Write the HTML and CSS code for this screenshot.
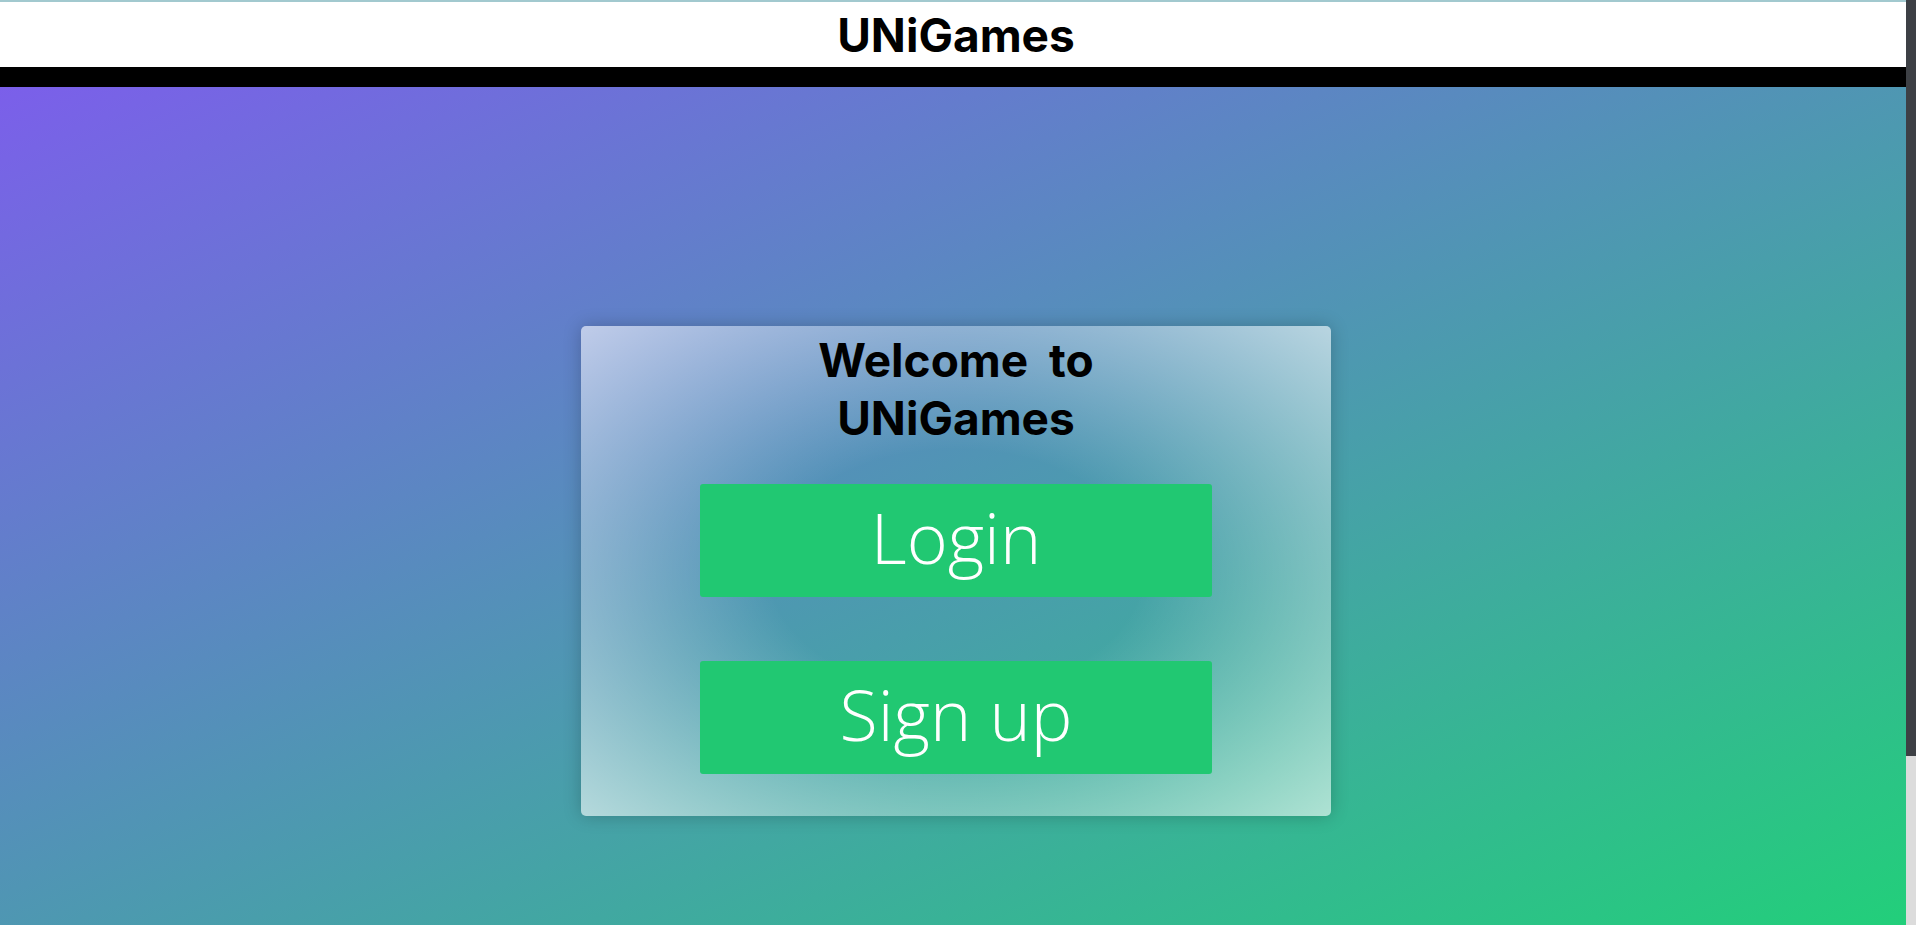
FILE: index.html
```html
<!DOCTYPE html>
<html lang="en">
<head>
<meta charset="utf-8">
<title>UNiGames</title>
<link rel="stylesheet" href="styles.css">
</head>
<body>
<header class="topbar">
  <div class="brand">UNiGames</div>
</header>
<div class="divider"></div>
<main class="hero">
  <section class="card">
    <h1 class="card-title">Welcome to<br>UNiGames</h1>
    <div class="actions">
      <a class="btn" href="#">Login</a>
      <a class="btn" href="#">Sign up</a>
    </div>
  </section>
</main>
<div class="scrollbar" aria-hidden="true"><div class="scrollbar-thumb"></div></div>
</body>
</html>
```

FILE: styles.css
```css
html, body {
  margin: 0;
  padding: 0;
}

body {
  font-family: "Inter", "Liberation Sans", sans-serif;
  background: #22cd7a;
  overflow: hidden;
}

.topbar {
  height: 65px;
  background: #ffffff;
  border-top: 2px solid #a2c9cf;
  display: flex;
  align-items: center;
  justify-content: center;
  padding-right: 4px;
}

.brand {
  font-family: "Inter", sans-serif;
  font-weight: 700;
  font-size: 46px;
  line-height: 1;
  color: #000;
}

.divider {
  height: 20px;
  background: #000;
}

.hero {
  height: 838px;
  background: linear-gradient(to bottom right, #7b5fea, #22cf7a);
  display: flex;
  justify-content: center;
  padding-top: 239px;
  padding-right: 4px;
  box-sizing: border-box;
}

.card {
  width: 750px;
  height: 490px;
  box-sizing: border-box;
  border-radius: 5px;
  background: radial-gradient(ellipse at center, rgba(255,255,255,0) 35%, rgba(255,255,255,0.6) 100%);
  box-shadow: 0 0 18px rgba(0, 0, 0, 0.22);
  padding-top: 5px;
  display: flex;
  flex-direction: column;
  align-items: center;
}

.card-title {
  margin: 0;
  font-family: "Inter", sans-serif;
  font-weight: 700;
  font-size: 46px;
  line-height: 58px;
  word-spacing: 10px;
  text-align: center;
  color: #000;
}

.actions {
  margin-top: 37px;
  display: flex;
  flex-direction: column;
  gap: 64px;
}

.btn {
  display: flex;
  align-items: center;
  justify-content: center;
  width: 512px;
  height: 113px;
  background: #21c872;
  border-radius: 3px;
  color: #ffffff;
  text-decoration: none;
  font-family: "Open Sans", sans-serif;
  font-weight: 300;
  font-size: 70px;
  padding-bottom: 8px;
  box-sizing: border-box;
}

.scrollbar {
  position: fixed;
  top: 0;
  right: 0;
  width: 10px;
  height: 100vh;
  background: #dcdcdc;
}

.scrollbar-thumb {
  height: 756px;
  background: #3d4045;
}
```
